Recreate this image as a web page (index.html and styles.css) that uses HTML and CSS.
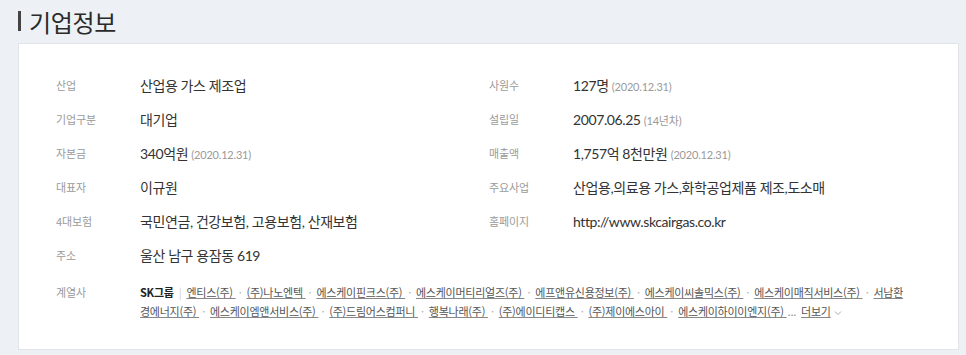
FILE: index.html
```html
<!DOCTYPE html>
<html lang="ko">
<head>
<meta charset="utf-8">
<link rel="stylesheet" href="styles.css">
</head>
<body>
<div class="page">
  <h2 class="title"><span class="bar"></span>기업정보</h2>
  <div class="box">
    <dl class="grid">
      <div class="item"><dt>산업</dt><dd>산업용 가스 제조업</dd></div>
      <div class="item"><dt>사원수</dt><dd>127명 <span class="sub">(2020.12.31)</span></dd></div>
      <div class="item"><dt>기업구분</dt><dd>대기업</dd></div>
      <div class="item"><dt>설립일</dt><dd>2007.06.25 <span class="sub">(14년차)</span></dd></div>
      <div class="item"><dt>자본금</dt><dd>340억원 <span class="sub">(2020.12.31)</span></dd></div>
      <div class="item"><dt>매출액</dt><dd>1,757억 8천만원 <span class="sub">(2020.12.31)</span></dd></div>
      <div class="item"><dt>대표자</dt><dd>이규원</dd></div>
      <div class="item"><dt>주요사업</dt><dd>산업용,의료용 가스,화학공업제품 제조,도소매</dd></div>
      <div class="item"><dt>4대보험</dt><dd>국민연금, 건강보험, 고용보험, 산재보험</dd></div>
      <div class="item"><dt>홈페이지</dt><dd>http://www.skcairgas.co.kr</dd></div>
      <div class="item"><dt>주소</dt><dd>울산 남구 용잠동 619</dd></div>
      <div class="item"></div>
      <div class="item wide"><dt>계열사</dt><dd class="affil"><strong>SK그룹</strong><span class="pipe">|</span><a>엔티스(주) </a><span class="dot">·</span><a>(주)나노엔텍 </a><span class="dot">·</span><a>에스케이핀크스(주) </a><span class="dot">·</span><a>에스케이머티리얼즈(주) </a><span class="dot">·</span><a>에프앤유신용정보(주) </a><span class="dot">·</span><a>에스케이씨솔믹스(주) </a><span class="dot">·</span><a>에스케이매직서비스(주) </a><span class="dot">·</span><a>서남환경에너지(주) </a><span class="dot">·</span><a>에스케이엠앤서비스(주) </a><span class="dot">·</span><a>(주)드림어스컴퍼니 </a><span class="dot">·</span><a>행복나래(주) </a><span class="dot">·</span><a>(주)에이디티캡스 </a><span class="dot">·</span><a>(주)제이에스아이 </a><span class="dot">·</span><a>에스케이하이이엔지(주) </a><span class="ell">...</span><a class="more">더보기</a><svg class="chev" width="8" height="6" viewBox="0 0 8 6"><path d="M1 1.5 L4 4.5 L7 1.5" fill="none" stroke="#aaa" stroke-width="1"/></svg></dd></div>
    </dl>
  </div>
</div>
</body>
</html>
```

FILE: styles.css
```css
html, body {
  margin: 0;
  padding: 0;
  background: #edf0f4;
}
body {
  font-family: "Noto Sans CJK KR", "Noto Sans", sans-serif;
  color: #333;
  width: 966px;
  height: 355px;
  overflow: hidden;
}
.page {
  padding: 6px 7px 0 18px;
}
.title {
  display: flex;
  align-items: center;
  margin: 0;
  height: 30px;
  font-size: 24px;
  font-weight: 400;
  color: #2a2a2a;
  letter-spacing: -0.3px;
}
.bar {
  display: inline-block;
  width: 3px;
  height: 20px;
  background: #444;
  margin-right: 8px;
}
.box {
  margin-top: 7px;
  background: #fff;
  border: 1px solid #e1e4e8;
  padding: 24px 52px 28px 37px;
}
.grid {
  margin: 0;
  display: grid;
  grid-template-columns: 433px 1fr;
  grid-auto-rows: minmax(34px, auto);
}
.item {
  display: flex;
  align-items: center;
}
.item.wide {
  grid-column: 1 / -1;
  align-items: flex-start;
  padding-top: 11px;
}
dt {
  width: 84px;
  flex: none;
  font-size: 11px;
  letter-spacing: -0.1px;
  color: #9a9a9a;
}
.wide dt {
  line-height: 19px;
}
dd {
  margin: 0;
  font-family: "Lato", "Noto Sans CJK KR", sans-serif;
  font-size: 14px;
  letter-spacing: -0.4px;
  color: #333;
}
.sub {
  font-size: 11px;
  letter-spacing: -0.2px;
  color: #9a9a9a;
}
.affil {
  font-family: "Noto Sans CJK KR", sans-serif;
  font-size: 11px;
  letter-spacing: -0.25px;
  line-height: 19px;
  color: #555;
}
.affil strong {
  font-weight: 700;
  color: #222;
}
.pipe {
  color: #ccc;
  margin: 0 5px;
}
.affil a {
  color: #555;
  text-decoration: underline;
  text-decoration-color: #888;
}
.dot {
  color: #aaa;
  margin: 0 5px 0 3px;
}
.ell {
  color: #888;
  margin: 0 5px 0 1px;
}
.chev {
  margin-left: 3px;
  vertical-align: middle;
}
```
